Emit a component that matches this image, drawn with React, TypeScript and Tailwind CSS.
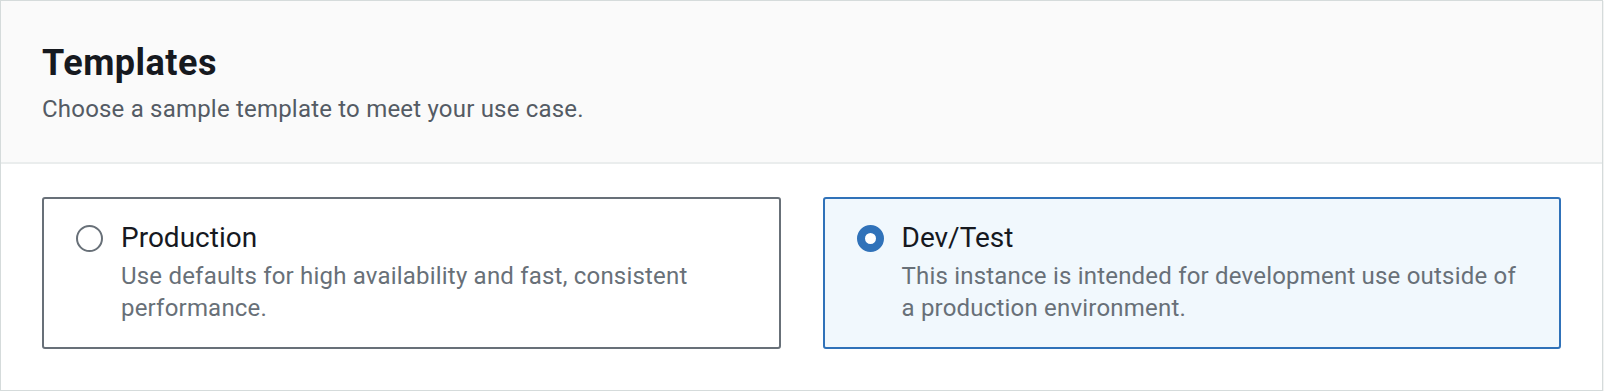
const font = { fontFamily: "Roboto, 'Open Sans', Arial, sans-serif" };

interface TileProps {
  label: string;
  description: string;
  selected?: boolean;
}

function Tile({ label, description, selected }: TileProps) {
  return (
    <div
      className={
        selected
          ? "flex gap-[18px] rounded-[3px] border-2 border-[#3072b9] bg-[#f1f8fd] pl-[32px] pr-[34px] pt-[21px] pb-[23px]"
          : "flex gap-[18px] rounded-[3px] border-2 border-[#687078] bg-white pl-[32px] pr-[34px] pt-[21px] pb-[23px]"
      }
    >
      <div className="flex h-[36px] shrink-0 items-center">
        {selected ? (
          <span className="block h-[27px] w-[27px] rounded-full border-[8px] border-[#3072b9] bg-white" />
        ) : (
          <span className="block h-[27px] w-[27px] rounded-full border-2 border-[#687078] bg-white" />
        )}
      </div>
      <div className="flex flex-col">
        <span className="text-[28px] leading-[36px] text-[#16191f]">{label}</span>
        <p className="mt-[4px] text-[24px] leading-[32px] tracking-[0.2px] text-[#687078]">
          {description}
        </p>
      </div>
    </div>
  );
}

export default function App() {
  return (
    <div style={font} className="w-[1603px] bg-white">
      <div className="border border-[#d5dbdb] shadow-[0_1px_1px_0_rgba(0,28,36,0.3)]">
        <div className="border-b-2 border-[#eaeded] bg-[#fafafa] px-[41px] pt-[40px] pb-[37px]">
          <h2 className="text-[36px] font-bold leading-[44px] tracking-[0.5px] text-[#16191f]">
            Templates
          </h2>
          <p className="mt-[8px] text-[24px] leading-[32px] tracking-[0.2px] text-[#545b64]">
            Choose a sample template to meet your use case.
          </p>
        </div>
        <div className="grid grid-cols-2 gap-[42px] px-[41px] pt-[33px] pb-[41px]">
          <Tile
            label="Production"
            description="Use defaults for high availability and fast, consistent performance."
          />
          <Tile
            selected
            label="Dev/Test"
            description="This instance is intended for development use outside of a production environment."
          />
        </div>
      </div>
    </div>
  );
}
